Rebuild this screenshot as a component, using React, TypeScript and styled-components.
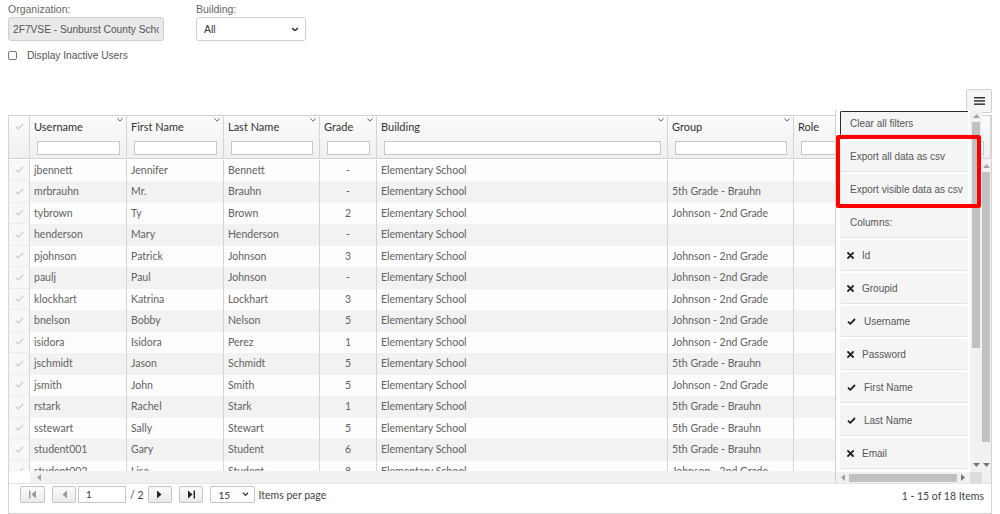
import React from 'react';
import styled, { createGlobalStyle, css } from 'styled-components';

const GlobalStyle = createGlobalStyle`
  html, body {
    margin: 0;
    padding: 0;
    background: #fff;
  }
  body {
    font-family: "Liberation Sans", Arial, sans-serif;
  }
  * {
    box-sizing: border-box;
  }
`;

const COLS = '21px 97px 97px 96px 57px 291px 126px 1fr';
const TABLE_FONT = 'Lato, "Open Sans", sans-serif';

const Page = styled.div`
  width: 1000px;
  height: 514px;
  overflow: hidden;
  padding: 3px 8px 0;
`;

const FormRow = styled.div`
  display: flex;
  gap: 32px;
`;

const Field = styled.div`
  display: flex;
  flex-direction: column;
`;

const Label = styled.label`
  font-size: 10.5px;
  line-height: 12px;
  color: #666;
  margin-bottom: 2px;
`;

const OrgInput = styled.input`
  width: 156px;
  height: 24px;
  background: #e9e9e9;
  border: 1px solid #cfcfcf;
  border-radius: 3px;
  font-family: "Liberation Sans", Arial, sans-serif;
  font-size: 10.2px;
  color: #555;
  padding: 0 4px;
  outline: none;
`;

const SelectBox = styled.div`
  width: 110px;
  height: 24px;
  border: 1px solid #cfcfcf;
  border-radius: 3px;
  background: #fff;
  display: flex;
  align-items: center;
  justify-content: space-between;
  padding: 0 6px 0 7px;
  font-size: 10.5px;
  color: #333;
`;

const CheckRow = styled.div`
  display: flex;
  align-items: center;
  margin-top: 8px;
  height: 12px;
`;

const Checkbox = styled.span`
  width: 9px;
  height: 9px;
  border: 1px solid #767676;
  border-radius: 2px;
  background: #fff;
`;

const CheckLabel = styled.span`
  margin-left: 10px;
  font-size: 10.2px;
  color: #555;
`;

const Toolbar = styled.div`
  display: flex;
  justify-content: flex-end;
  margin-top: 28px;
`;

const MenuButton = styled.div`
  width: 26px;
  height: 24px;
  border: 1px solid #d0d0d0;
  border-radius: 2px;
  background: #f6f6f6;
  display: flex;
  align-items: center;
  justify-content: center;
`;

const Grid = styled.div`
  position: relative;
  margin-top: 2px;
  height: 399px;
  border: 1px solid #d4d4d4;
  font-family: ${TABLE_FONT};
`;

const Header = styled.div`
  display: grid;
  grid-template-columns: ${COLS};
  height: 43px;
  border-bottom: 1px solid #d4d4d4;
  background: linear-gradient(#fbfbfb, #f0f0f0);
`;

const HeaderCell = styled.div<{ $check?: boolean }>`
  position: relative;
  display: flex;
  flex-direction: column;
  border-right: 1px solid #d4d4d4;
  padding: 0 6px 0 4px;
  ${(p) =>
    p.$check &&
    css`
      align-items: center;
      padding: 7px 0 0;
    `}
`;

const HeaderLabel = styled.div`
  height: 22px;
  line-height: 22px;
  font-size: 11px;
  color: #333;
  white-space: nowrap;
`;

const FilterInput = styled.div`
  height: 14px;
  margin: 3px 0 0 3px;
  border: 1px solid #c8c8c8;
  background: #fff;
`;

const Caret = styled.span`
  position: absolute;
  top: 2px;
  right: 3px;
  display: flex;
`;

const Body = styled.div`
  display: flex;
  height: 312px;
`;

const Rows = styled.div`
  flex: 1;
  overflow: hidden;
  padding-top: 0.5px;
`;

const Row = styled.div<{ $odd: boolean }>`
  display: grid;
  grid-template-columns: ${COLS};
  height: 21.5px;
  background: ${(p) => (p.$odd ? '#f2f2f2' : '#fdfdfd')};
`;

const Cell = styled.div<{ $center?: boolean }>`
  border-right: 1px solid #d4d4d4;
  padding: 0 4px;
  font-size: 10.5px;
  line-height: 21.5px;
  color: #626262;
  white-space: nowrap;
  overflow: hidden;
  text-align: ${(p) => (p.$center ? 'center' : 'left')};
`;

const CheckCell = styled.div`
  border-right: 1px solid #d4d4d4;
  border-bottom: 1px solid #ececec;
  background: #f7f7f7;
  display: flex;
  align-items: center;
  justify-content: center;
`;

const VScroll = styled.div`
  width: 10px;
  background: #f1f1f1;
  display: flex;
  flex-direction: column;
  align-items: center;
  padding: 4px 0 3px;
`;

const Track = styled.div`
  flex: 1;
  width: 100%;
  display: flex;
  flex-direction: column;
  padding: 3px 1px;
`;

const Thumb = styled.div<{ $size: string }>`
  height: ${(p) => p.$size};
  background: #c1c1c1;
`;

const HThumb = styled.div`
  flex: 1;
  height: 8px;
  background: #c1c1c1;
`;

const HScroll = styled.div`
  display: flex;
  height: 12px;
`;

const HScrollSpacer = styled.div`
  width: 21px;
  background: #fff;
`;

const HScrollTrack = styled.div`
  flex: 1;
  background: #f1f1f1;
  display: flex;
  align-items: center;
  padding-left: 6px;
`;

const Pager = styled.div`
  height: 30px;
  display: flex;
  justify-content: space-between;
  padding: 2px 7px 0 11px;
  border-top: 1px solid #e6e6e6;
`;

const PagerLeft = styled.div`
  display: flex;
  align-items: center;
  height: 17px;
`;

const PagerButton = styled.div<{ $gap?: number; $w?: number }>`
  width: ${(p) => p.$w ?? 25}px;
  height: 17px;
  margin-left: ${(p) => p.$gap ?? 0}px;
  border: 1px solid #c6c6c6;
  border-radius: 2px;
  background: linear-gradient(#fcfcfc, #eaeaea);
  display: flex;
  align-items: center;
  justify-content: center;
`;

const PageInput = styled.div`
  width: 48px;
  height: 17px;
  margin-left: 2px;
  border: 1px solid #c6c6c6;
  background: #fff;
  font-size: 10px;
  line-height: 15px;
  padding-left: 7px;
  color: #333;
`;

const PagerText = styled.span<{ $gap?: number }>`
  margin-left: ${(p) => p.$gap ?? 0}px;
  font-size: 10.5px;
  color: #444;
`;

const PageSize = styled.div`
  width: 45px;
  height: 17px;
  margin-left: 7px;
  border: 1px solid #c6c6c6;
  border-radius: 2px;
  background: #fff;
  display: flex;
  align-items: center;
  justify-content: space-between;
  padding: 0 5px 0 8px;
  font-size: 10px;
  color: #333;
`;

const PagerCount = styled.span`
  margin-top: 4px;
  font-size: 10.5px;
  color: #444;
`;

const Menu = styled.div`
  position: absolute;
  top: -6px;
  left: 826px;
  width: 147px;
  height: 373px;
  background: #fff;
  border-left: 1px solid #cfcfcf;
  display: grid;
  grid-template-columns: 1fr 12px;
  grid-template-rows: 1fr 11px;
  font-family: "Liberation Sans", Arial, sans-serif;
`;

const MenuList = styled.div`
  overflow: hidden;
  padding: 1px 2px 0 4px;
`;

const MenuItem = styled.div<{ $focus?: boolean }>`
  height: 31px;
  margin-bottom: 2px;
  background: #f5f5f5;
  border-bottom: 1px solid #e3e3e3;
  border-radius: 2px;
  display: flex;
  align-items: center;
  padding-left: 10px;
  font-size: 10px;
  color: #555;
  white-space: nowrap;

  ${(p) =>
    p.$focus &&
    css`
      height: 24px;
      margin-bottom: 6px;
      border-top: 1px solid #2a2a2a;
      border-left: 1px solid #2a2a2a;
      border-radius: 2px 0 0 0;
      padding-left: 9px;
    `}
`;

const ItemIcon = styled.span<{ $width: number }>`
  width: ${(p) => p.$width}px;
  margin-left: -3px;
  display: flex;
  align-items: center;
`;

const MenuVScroll = styled.div`
  background: #f1f1f1;
  display: flex;
  flex-direction: column;
  align-items: center;
  padding: 3px 1px 4px;
`;

const MenuHScroll = styled.div`
  background: #f1f1f1;
  display: flex;
  align-items: center;
  padding: 0 4px;
  gap: 3px;
`;

const Corner = styled.div`
  background: #dcdcdc;
`;

const Highlight = styled.div`
  position: absolute;
  left: 827px;
  top: 19px;
  width: 145px;
  height: 73px;
  border: 4px solid #ff0000;
  border-radius: 2px;
  pointer-events: none;
`;

const Tick = ({ color = '#c9c9c9' }: { color?: string }) => (
  <svg width="9" height="7" viewBox="0 0 9 7">
    <polyline points="0.8,3.6 3.2,6 8.2,0.8" fill="none" stroke={color} strokeWidth="1.1" />
  </svg>
);

const CaretIcon = () => (
  <svg width="6" height="4" viewBox="0 0 6 4">
    <polyline points="0.5,0.5 3,3.2 5.5,0.5" fill="none" stroke="#555" strokeWidth="0.9" />
  </svg>
);

const Chevron = ({ w = 8 }: { w?: number }) => (
  <svg width={w} height={w * 0.6} viewBox="0 0 8 5">
    <polyline points="1,1 4,4 7,1" fill="none" stroke="#333" strokeWidth="1.6" />
  </svg>
);

const Arrow = ({ dir, color = '#a3a3a3' }: { dir: 'up' | 'down' | 'left' | 'right'; color?: string }) => {
  const pts = {
    up: '0,5 3.5,1 7,5',
    down: '0,1 7,1 3.5,5',
    left: '5,0 5,7 1,3.5',
    right: '1,0 1,7 5,3.5',
  }[dir];
  const vert = dir === 'up' || dir === 'down';
  return (
    <svg width={vert ? 7 : 6} height={vert ? 6 : 7} viewBox={vert ? '0 0 7 6' : '0 0 6 7'}>
      <polygon points={pts} fill={color} />
    </svg>
  );
};

const PagerIcon = ({ kind, color }: { kind: 'first' | 'prev' | 'next' | 'last'; color: string }) => (
  <svg width="10" height="9" viewBox="0 0 10 9">
    {kind === 'first' && <rect x="1" y="0.5" width="1.4" height="8" fill={color} />}
    {(kind === 'first' || kind === 'prev') && <polygon points="8,0.5 8,8.5 3.5,4.5" fill={color} />}
    {(kind === 'next' || kind === 'last') && <polygon points="2,0.5 2,8.5 6.5,4.5" fill={color} />}
    {kind === 'last' && <rect x="7.6" y="0.5" width="1.4" height="8" fill={color} />}
  </svg>
);

const XMark = () => (
  <svg width="7" height="7" viewBox="0 0 7 7">
    <path d="M1 1 L6 6 M6 1 L1 6" stroke="#222" strokeWidth="1.8" strokeLinecap="square" />
  </svg>
);

const CheckMark = () => (
  <svg width="9" height="7" viewBox="0 0 9 7">
    <polyline points="1,3.6 3.3,5.8 8,1" fill="none" stroke="#222" strokeWidth="1.8" />
  </svg>
);

const headers = ['Username', 'First Name', 'Last Name', 'Grade', 'Building', 'Group', 'Role'];

const users = [
  ['jbennett', 'Jennifer', 'Bennett', '-', ''],
  ['mrbrauhn', 'Mr.', 'Brauhn', '-', '5th Grade - Brauhn'],
  ['tybrown', 'Ty', 'Brown', '2', 'Johnson - 2nd Grade'],
  ['henderson', 'Mary', 'Henderson', '-', ''],
  ['pjohnson', 'Patrick', 'Johnson', '3', 'Johnson - 2nd Grade'],
  ['paulj', 'Paul', 'Johnson', '-', 'Johnson - 2nd Grade'],
  ['klockhart', 'Katrina', 'Lockhart', '3', 'Johnson - 2nd Grade'],
  ['bnelson', 'Bobby', 'Nelson', '5', 'Johnson - 2nd Grade'],
  ['isidora', 'Isidora', 'Perez', '1', 'Johnson - 2nd Grade'],
  ['jschmidt', 'Jason', 'Schmidt', '5', '5th Grade - Brauhn'],
  ['jsmith', 'John', 'Smith', '5', 'Johnson - 2nd Grade'],
  ['rstark', 'Rachel', 'Stark', '1', '5th Grade - Brauhn'],
  ['sstewart', 'Sally', 'Stewart', '5', '5th Grade - Brauhn'],
  ['student001', 'Gary', 'Student', '6', '5th Grade - Brauhn'],
  ['student002', 'Lisa', 'Student', '8', 'Johnson - 2nd Grade'],
];

const columnToggles: [string, boolean][] = [
  ['Id', false],
  ['Groupid', false],
  ['Username', true],
  ['Password', false],
  ['First Name', true],
  ['Last Name', true],
  ['Email', false],
];

const App: React.FC = () => {
  return (
    <Page>
      <GlobalStyle />
      <FormRow>
        <Field>
          <Label>Organization:</Label>
          <OrgInput readOnly value="2F7VSE - Sunburst County School District" />
        </Field>
        <Field>
          <Label>Building:</Label>
          <SelectBox>
            All
            <Chevron />
          </SelectBox>
        </Field>
      </FormRow>
      <CheckRow>
        <Checkbox />
        <CheckLabel>Display Inactive Users</CheckLabel>
      </CheckRow>

      <Toolbar>
        <MenuButton>
          <svg width="11" height="8" viewBox="0 0 11 8">
            <rect y="0" width="11" height="1.5" fill="#333" />
            <rect y="3.2" width="11" height="1.5" fill="#333" />
            <rect y="6.4" width="11" height="1.5" fill="#333" />
          </svg>
        </MenuButton>
      </Toolbar>

      <Grid>
        <Header>
          <HeaderCell $check>
            <Tick />
          </HeaderCell>
          {headers.map((h) => (
            <HeaderCell key={h}>
              <HeaderLabel>{h}</HeaderLabel>
              <FilterInput />
              {h !== 'Role' && (
                <Caret>
                  <CaretIcon />
                </Caret>
              )}
            </HeaderCell>
          ))}
        </Header>

        <Body>
          <Rows>
            {users.map(([user, first, last, grade, group], i) => (
              <Row key={user} $odd={i % 2 === 1}>
                <CheckCell>
                  <Tick />
                </CheckCell>
                <Cell>{user}</Cell>
                <Cell>{first}</Cell>
                <Cell>{last}</Cell>
                <Cell $center>{grade}</Cell>
                <Cell>Elementary School</Cell>
                <Cell>{group}</Cell>
                <Cell />
              </Row>
            ))}
          </Rows>
          <VScroll>
            <Arrow dir="up" />
            <Track>
              <Thumb $size="94%" />
            </Track>
            <Arrow dir="down" color="#777" />
          </VScroll>
        </Body>

        <HScroll>
          <HScrollSpacer />
          <HScrollTrack>
            <Arrow dir="left" />
          </HScrollTrack>
        </HScroll>

        <Pager>
          <PagerLeft>
            <PagerButton>
              <PagerIcon kind="first" color="#9a9a9a" />
            </PagerButton>
            <PagerButton $gap={7} $w={24}>
              <PagerIcon kind="prev" color="#9a9a9a" />
            </PagerButton>
            <PageInput>1</PageInput>
            <PagerText $gap={4}>/ 2</PagerText>
            <PagerButton $gap={4} $w={24}>
              <PagerIcon kind="next" color="#222" />
            </PagerButton>
            <PagerButton $gap={7} $w={24}>
              <PagerIcon kind="last" color="#222" />
            </PagerButton>
            <PageSize>
              15
              <Chevron w={7} />
            </PageSize>
            <PagerText $gap={4}>Items per page</PagerText>
          </PagerLeft>
          <PagerCount>1 - 15 of 18 Items</PagerCount>
        </Pager>

        <Menu>
          <MenuList>
            <MenuItem $focus>Clear all filters</MenuItem>
            <MenuItem>Export all data as csv</MenuItem>
            <MenuItem>Export visible data as csv</MenuItem>
            <MenuItem>Columns:</MenuItem>
            {columnToggles.map(([name, on]) => (
              <MenuItem key={name}>
                <ItemIcon $width={on ? 17 : 15}>{on ? <CheckMark /> : <XMark />}</ItemIcon>
                {name}
              </MenuItem>
            ))}
          </MenuList>
          <MenuVScroll>
            <Arrow dir="up" />
            <Track>
              <Thumb $size="67%" />
            </Track>
            <Arrow dir="down" color="#777" />
          </MenuVScroll>
          <MenuHScroll>
            <Arrow dir="left" />
            <HThumb />
            <Arrow dir="right" color="#777" />
          </MenuHScroll>
          <Corner />
        </Menu>

        <Highlight />
      </Grid>
    </Page>
  );
};

export default App;
